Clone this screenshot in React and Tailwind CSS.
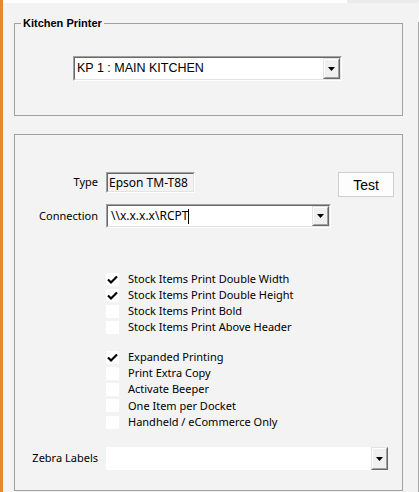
import React from 'react';

const Arrow = () => (
  <svg width="7" height="4" viewBox="0 0 7 4">
    <path d="M0 0h7L3.5 4z" fill="#000" />
  </svg>
);

const DropButton = ({ className = '' }) => (
  <div className={`w-[17px] shrink-0 border border-t-[#e3e3e3] border-l-[#e3e3e3] border-r-[#696969] border-b-[#696969] bg-[#f0f0f0] ${className}`}>
    <div className="h-full border border-t-white border-l-white border-r-[#a0a0a0] border-b-[#a0a0a0] flex items-center justify-center">
      <Arrow />
    </div>
  </div>
);

const Sunken = ({ className = '', inner = '', children }) => (
  <div className={`border border-t-[#a0a0a0] border-l-[#a0a0a0] border-r-white border-b-white ${className}`}>
    <div className={`h-full border border-t-[#696969] border-l-[#696969] border-r-[#e3e3e3] border-b-[#e3e3e3] flex ${inner}`}>
      {children}
    </div>
  </div>
);

const Check = () => (
  <svg width="13" height="13" viewBox="0 0 13 13">
    <path d="M2 6.5 L5 9.5 L11 3.5" fill="none" stroke="#000" strokeWidth="2.2" />
  </svg>
);

const CheckRow = ({ label, checked, h = 'h-4' }) => (
  <div className={`flex items-center ${h}`}>
    <div className="w-[13px] h-[13px] bg-white shrink-0">{checked && <Check />}</div>
    <span className="ml-[9px] text-[11px] leading-4 text-black whitespace-nowrap">{label}</span>
  </div>
);

export default function App() {
  const group1 = [
    ['Stock Items Print Double Width', true],
    ['Stock Items Print Double Height', true],
    ['Stock Items Print Bold', false],
    ['Stock Items Print Above Header', false],
  ];
  const group2 = [
    ['Expanded Printing', true, 'h-4'],
    ['Print Extra Copy', false, 'h-4'],
    ['Activate Beeper', false, 'h-4'],
    ['One Item per Docket', false, 'h-[17px]'],
    ['Handheld / eCommerce Only', false, 'h-4'],
  ];

  return (
    <div className="w-[419px] h-[492px] flex bg-[#f3f3f3] border-l-[3px] border-[#e38a2c] overflow-hidden font-['Noto_Sans','Liberation_Sans',sans-serif] text-black">
      <div className="flex-1 flex flex-col">
        <div className="flex h-[3px]">
          <div className="w-[344px] bg-white" />
          <div className="flex-1 bg-[#ebebeb]" />
        </div>

        <fieldset className="ml-[11px] mt-[13px] w-[389px] h-[100px] border border-[#a0a0a0] px-[6px] pt-[26px]">
          <legend className="px-[2px] text-[11px] leading-[14px] font-bold font-['Liberation_Sans',sans-serif]">
            Kitchen Printer
          </legend>
          <Sunken className="ml-[52px] w-[269px] h-[25px]" inner="items-stretch">
            <div className="flex-1 pl-[2px] flex items-center bg-white text-[12.5px] font-['Liberation_Sans',sans-serif] whitespace-nowrap">
              KP 1 : MAIN KITCHEN
            </div>
            <DropButton />
          </Sunken>
        </fieldset>

        <div className="ml-[11px] mt-[18px] w-[389px] h-[357px] border border-[#a0a0a0] pt-[37px]">
          <div className="flex items-start">
            <div className="w-[83px] h-[21px] flex items-center justify-end text-[11px]">Type</div>
            <Sunken className="ml-[8px] w-[89px] h-[21px]" inner="items-center bg-[#f3f3f3]">
              <span className="pl-[1px] text-[12px] leading-none whitespace-nowrap">Epson TM-T88</span>
            </Sunken>
            <button className="ml-[143px] w-[56px] h-[25px] border border-[#cfcfcf] bg-[#fdfdfd] text-[14px] font-['Liberation_Sans',sans-serif] leading-none">
              Test
            </button>
          </div>

          <div className="flex items-center mt-[7px]">
            <div className="w-[83px] text-right text-[11px]">Connection</div>
            <Sunken className="ml-[8px] w-[225px] h-[24px]" inner="items-stretch">
              <div className="flex-1 flex items-center bg-white pl-[3px] text-[12px] whitespace-nowrap">
                <span>\\x.x.x.x\RCPT</span>
                <span className="w-px h-[15px] bg-black" />
              </div>
              <DropButton />
            </Sunken>
          </div>

          <div className="pl-[91px] mt-[43px]">
            {group1.map(([label, checked]) => (
              <CheckRow key={label} label={label} checked={checked} />
            ))}
            <div className="h-[14px]" />
            {group2.map(([label, checked, h]) => (
              <CheckRow key={label} label={label} checked={checked} h={h} />
            ))}
          </div>

          <div className="flex items-center mt-[17px]">
            <div className="w-[83px] text-right text-[11px]">Zebra Labels</div>
            <div className="ml-[8px] w-[282px] h-[23px] flex bg-white">
              <div className="flex-1" />
              <DropButton />
            </div>
          </div>
        </div>
      </div>
      <div className="w-px mt-[22px] bg-[#a8a8a8]" />
    </div>
  );
}
